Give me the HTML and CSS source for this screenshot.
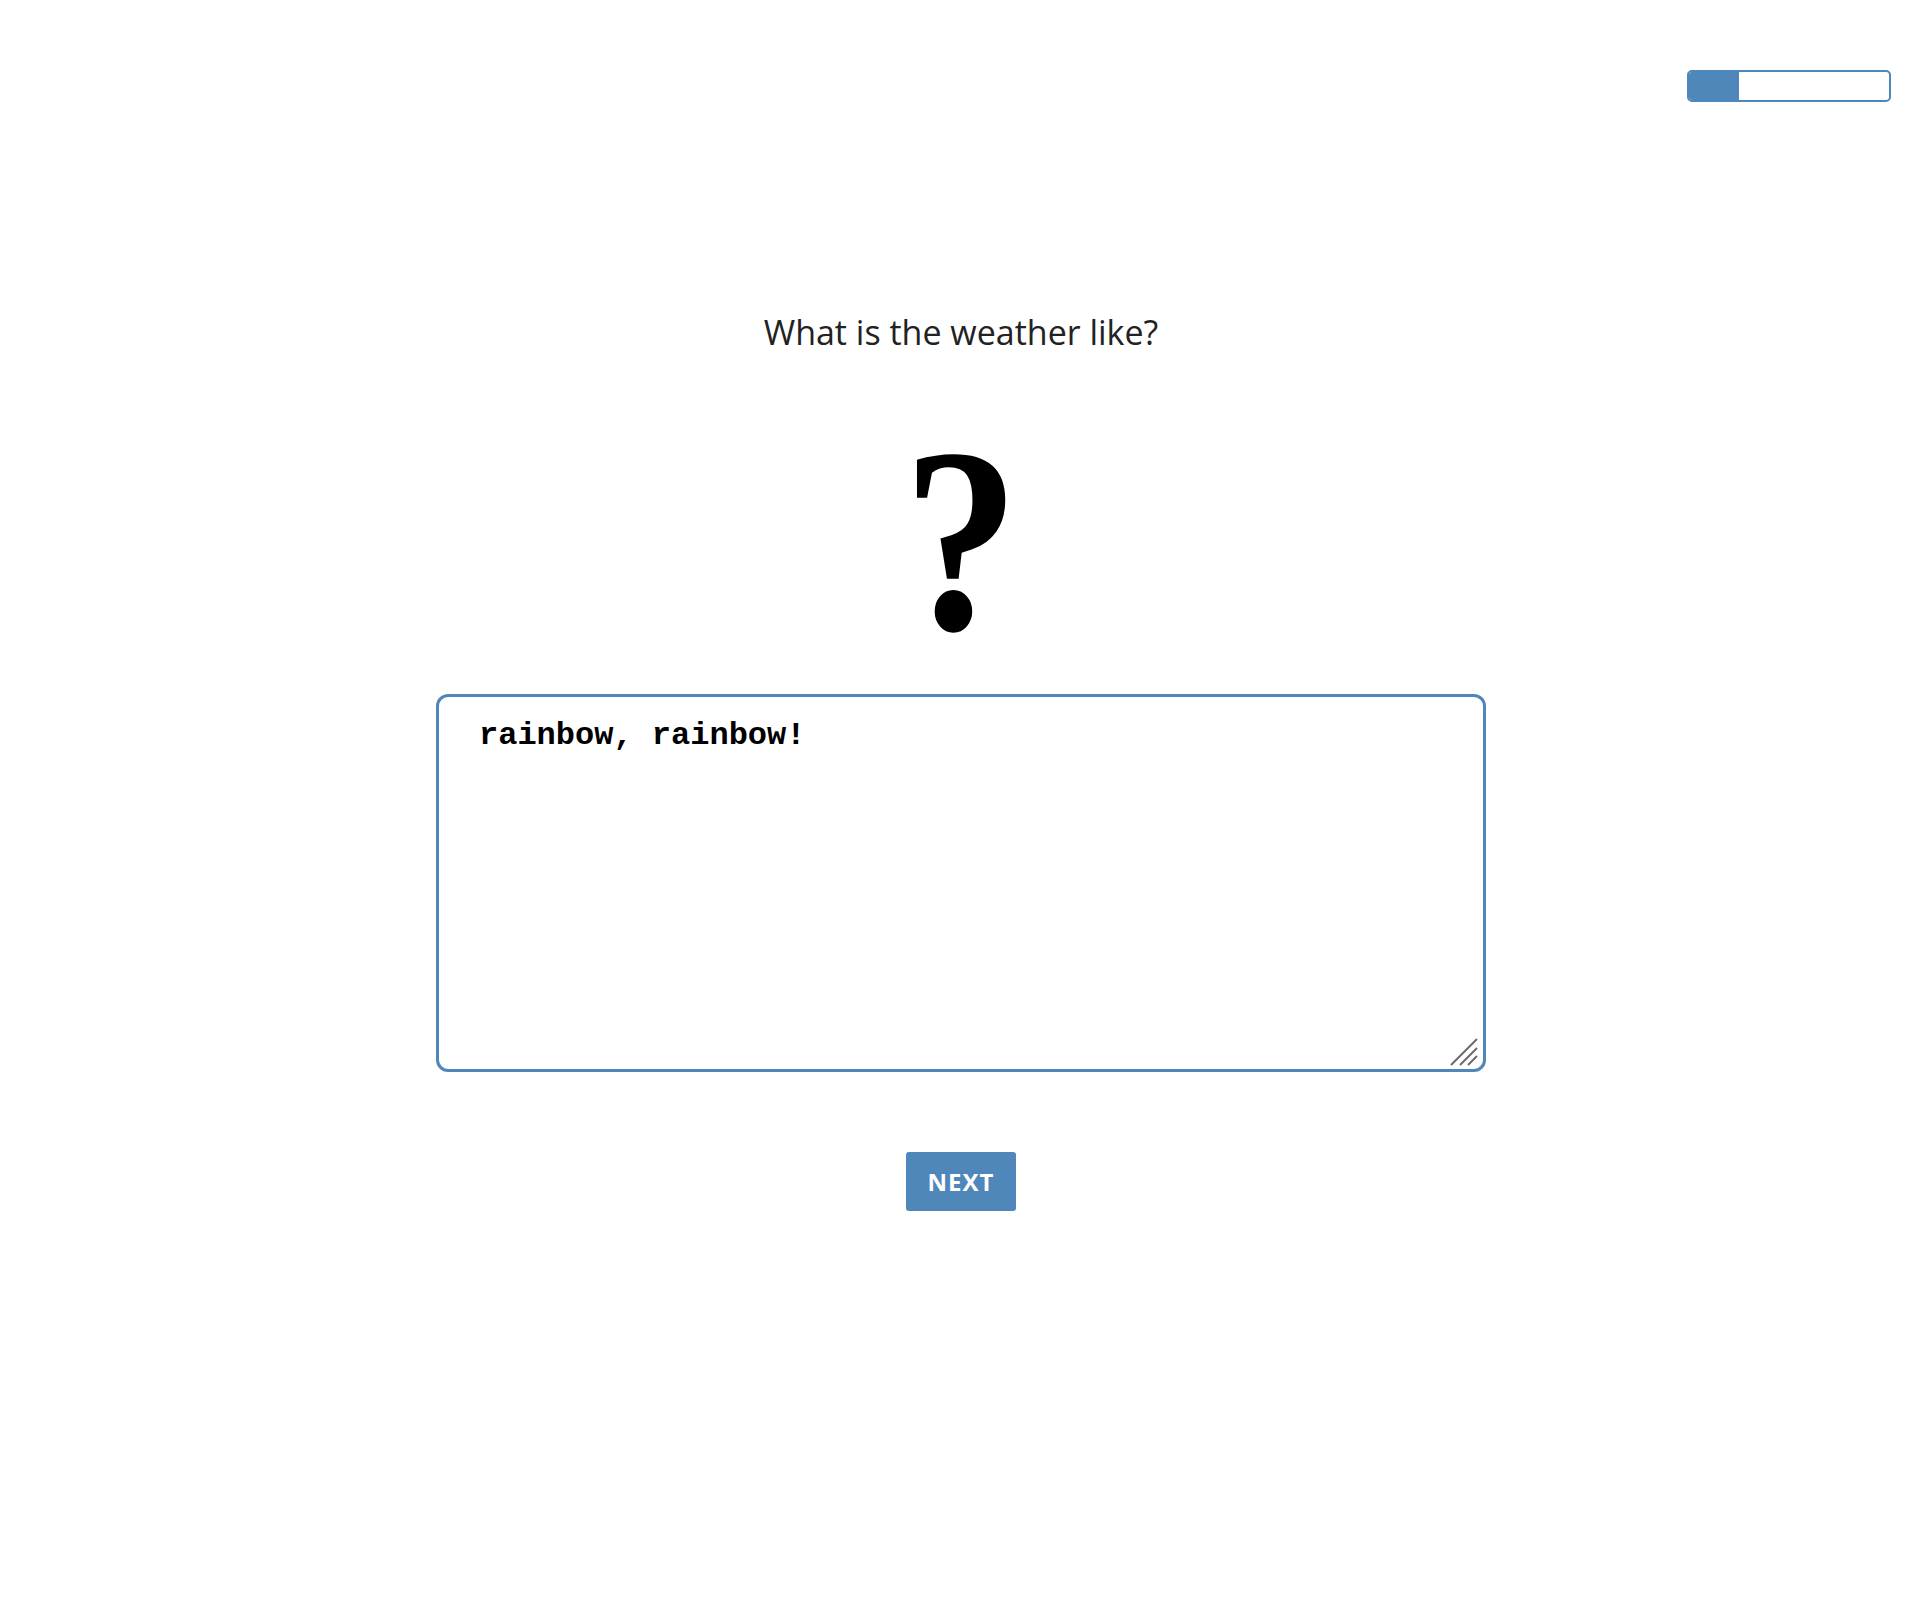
FILE: index.html
```html
<!DOCTYPE html>
<html lang="en">
<head>
<meta charset="utf-8">
<title>Question</title>
<link rel="stylesheet" href="styles.css">
</head>
<body>
<header class="top">
  <div class="progress"><div class="progress-fill" style="width:25%"></div></div>
</header>
<main class="quiz">
  <h1 class="prompt">What is the weather like?</h1>
  <div class="mark">?</div>
  <div class="answer-wrap">
    <textarea class="answer">rainbow, rainbow!</textarea>
    <svg class="grip" width="30" height="30" viewBox="0 0 30 30" aria-hidden="true">
      <path d="M2 28 L28 2 M11 28 L28 11 M19 28 L28 19" stroke="#6b6b6b" stroke-width="2" fill="none"/>
    </svg>
  </div>
  <button class="next">NEXT</button>
</main>
</body>
</html>
```
FILE: styles.css
```css
html, body {
  margin: 0;
  padding: 0;
  background: #fff;
}
body {
  font-family: "Open Sans", "Noto Sans", sans-serif;
  color: #222;
}
.top {
  display: flex;
  justify-content: flex-end;
  padding: 70px 31px 0 0;
}
.progress {
  width: 204px;
  height: 32px;
  box-sizing: border-box;
  border: 2px solid #4f87bb;
  border-radius: 5px;
  overflow: hidden;
}
.progress-fill {
  height: 100%;
  background: #4f87bb;
}
.quiz {
  display: flex;
  flex-direction: column;
  align-items: center;
}
.prompt {
  margin: 208px 0 0;
  font-size: 34px;
  font-weight: 400;
  line-height: 44px;
  color: #222;
}
.mark {
  margin-top: 54px;
  font-family: "Liberation Serif", "Times New Roman", serif;
  font-weight: 700;
  font-size: 264px;
  line-height: 1;
  color: #000;
  transform: scaleX(0.88);
}
.answer-wrap {
  position: relative;
  margin-top: 22px;
  width: 1050px;
  height: 378px;
}
.answer {
  display: block;
  width: 100%;
  height: 100%;
  box-sizing: border-box;
  border: 3px solid #4f87bb;
  border-radius: 12px;
  padding: 20px 40px;
  font-family: "Liberation Mono", "Courier New", monospace;
  font-weight: 700;
  font-size: 32px;
  color: #000;
  outline: none;
  resize: none;
}
.grip {
  position: absolute;
  right: 7px;
  bottom: 5px;
  pointer-events: none;
}
.next {
  margin-top: 80px;
  width: 110px;
  height: 59px;
  border: none;
  border-radius: 3px;
  background: #4f87bb;
  color: #fff;
  font-family: "Open Sans", sans-serif;
  font-weight: 700;
  font-size: 24px;
  letter-spacing: 1px;
}
```
